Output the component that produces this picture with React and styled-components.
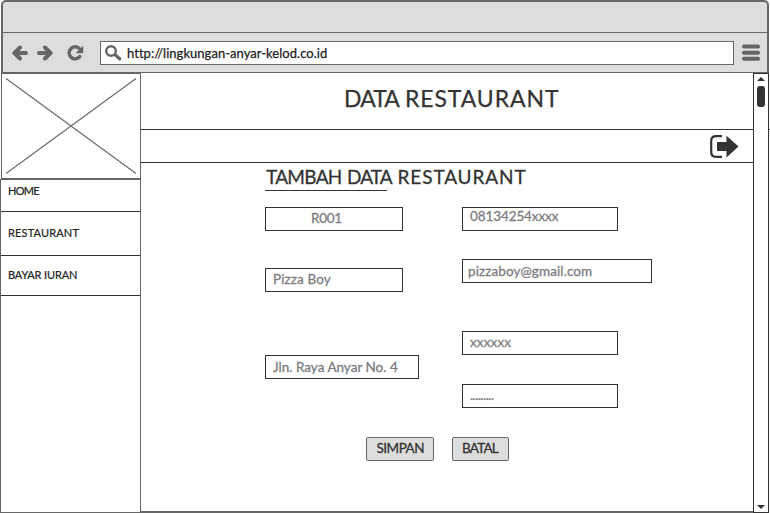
import React from "react";
import styled, { createGlobalStyle } from "styled-components";

const GRAY = "#666666";
const INK = "#333333";
const PANEL = "#dddddd";

const GlobalStyle = createGlobalStyle`
  * { box-sizing: border-box; }
  body { margin: 0; background: #fff; overflow: hidden; }
`;

const Page = styled.div`
  width: 770px;
  height: 513px;
  display: flex;
  flex-direction: column;
  background: #fff;
  color: ${INK};
  font-family: Lato, "Open Sans", sans-serif;
  font-weight: 400;
`;

const Chrome = styled.header`
  margin: 0 1px 0 1px;
  height: 73px;
  flex: none;
  border: 2px solid ${GRAY};
  border-bottom-width: 1px;
  border-radius: 5px 5px 0 0;
  background: ${PANEL};
`;

const TitleBar = styled.div`
  height: 31px;
  border-bottom: 1px solid ${GRAY};
`;

const Toolbar = styled.div`
  height: 39px;
  display: flex;
  align-items: center;
  padding: 0 7px 0 9px;
  svg { display: block; flex: none; }
`;

const NavIcons = styled.div`
  display: flex;
  width: 88px;
`;

const AddressBar = styled.div`
  display: flex;
  width: 634px;
  height: 24px;
  padding-left: 4px;
  margin-right: 8px;
  align-items: center;
  border: 1px solid ${GRAY};
  background: #fff;
`;

const Url = styled.span`
  margin-left: 5px;
  font-size: 13px;
  line-height: 16px;
  letter-spacing: 0.03px;
  white-space: nowrap;
  color: #222;
  -webkit-text-stroke: 0.25px #222;
`;

const Body = styled.div`
  flex: 1;
  display: flex;
  min-height: 0;
`;

const Sidebar = styled.aside`
  width: 141px;
  display: flex;
  flex-direction: column;
`;

const Picture = styled.div`
  height: 106px;
  margin-left: 1px;
  border: 1px solid ${GRAY};
  svg { display: block; }
`;

const Menu = styled.nav`
  flex: 1;
  border: 1px solid ${GRAY};
`;

const MenuItem = styled.div`
  height: ${(p) => p.$h}px;
  padding: ${(p) => p.$top}px 0 0 7px;
  border-bottom: 1px solid ${INK};
  font-size: 11px;
  line-height: 14px;
  letter-spacing: ${(p) => p.$ls}px;
  color: #222;
  -webkit-text-stroke: 0.2px #222;
`;

const Main = styled.main`
  width: 612px;
  display: flex;
  flex-direction: column;
  border-bottom: 2px solid ${GRAY};
`;

const PageTitle = styled.h1`
  margin: 0;
  height: 57px;
  display: flex;
  padding: 10px 0 0 203px;
  border-bottom: 1px solid ${INK};
  font-size: 23px;
  line-height: 30px;
  font-weight: 400;
  white-space: pre;
  -webkit-text-stroke: 0.25px ${INK};
`;

const Word = styled.span`
  flex: none;
  width: ${(p) => p.$w}px;
  letter-spacing: ${(p) => p.$ls}px;
`;

const ActionBar = styled.div`
  height: 33px;
  display: flex;
  justify-content: flex-end;
  padding: 5px 14px 0 0;
  border-bottom: 1px solid ${INK};
`;

const Content = styled.section`
  padding-left: 124px;
`;

const Heading = styled.h2`
  margin: 0;
  height: 27px;
  display: flex;
  padding: 2px 0 0 1px;
  font-size: 19px;
  line-height: 23px;
  font-weight: 400;
  white-space: pre;
  -webkit-text-stroke: 0.3px ${INK};
`;

const Rule = styled.div`
  width: 122px;
  height: 1px;
  background: ${INK};
`;

const Form = styled.div`
  display: flex;
  height: 246px;
  padding-top: 16px;
`;

const Column = styled.div`
  width: ${(p) => p.$w}px;
  display: flex;
  flex-direction: column;
`;

const Field = styled.div`
  width: ${(p) => p.$w}px;
  height: 24px;
  flex: none;
  margin-bottom: ${(p) => p.$gap || 0}px;
  padding: ${(p) => p.$top}px 0 0 ${(p) => p.$left}px;
  border: 1px solid ${INK};
  font-size: 13.5px;
  line-height: 16px;
  letter-spacing: ${(p) => p.$ls}px;
  white-space: nowrap;
  color: #7c7c80;
  -webkit-text-stroke: 0.3px #7c7c80;
`;

const Buttons = styled.div`
  display: flex;
  gap: 18px;
  padding-left: 101px;
`;

const Button = styled.button`
  width: ${(p) => p.$w}px;
  height: 24px;
  padding: 0 0 3px ${(p) => p.$left}px;
  border: 1px solid ${GRAY};
  border-radius: 2px;
  background: ${PANEL};
  color: ${INK};
  font: 400 13.5px/16px Lato, "Open Sans", sans-serif;
  letter-spacing: ${(p) => p.$ls}px;
  text-align: left;
  -webkit-text-stroke: 0.3px ${INK};
`;

const Scrollbar = styled.div`
  width: 16px;
  display: flex;
  flex-direction: column;
  align-items: center;
  padding: 3px 0;
  border: 1px solid ${INK};
  svg { display: block; }
`;

const Thumb = styled.div`
  width: 8px;
  height: 21px;
  margin-top: 5px;
  margin-bottom: auto;
  border-radius: 3px;
  background: ${INK};
`;

const Tick = styled.div`
  width: 1px;
  height: 1px;
  margin-top: 56px;
  background: ${INK};
`;

const Spacer = styled.span`
  width: ${(p) => p.$w}px;
`;

const BackArrow = () => (
  <svg width="16" height="16" viewBox="0 0 16 16" fill="none" stroke={GRAY} strokeWidth="4" strokeLinecap="round" strokeLinejoin="round">
    <path d="M8 2.5 2.4 8 8 13.5M3 8H14" />
  </svg>
);

const ForwardArrow = () => (
  <svg width="16" height="16" viewBox="0 0 16 16" fill="none" stroke={GRAY} strokeWidth="4" strokeLinecap="round" strokeLinejoin="round">
    <path d="M8 2.5 13.6 8 8 13.5M13 8H2" />
  </svg>
);

const Reload = () => (
  <svg width="17" height="16" viewBox="0 0 17 16">
    <path d="M12.4 3.6A6 6 0 1 0 12.8 11.6" fill="none" stroke={GRAY} strokeWidth="3.4" strokeLinecap="round" />
    <path d="M16.2 0.8V8.2H8.6Z" fill={GRAY} />
  </svg>
);

const Search = () => (
  <svg width="17" height="16" viewBox="0 0 17 16" fill="none" stroke={GRAY}>
    <circle cx="6" cy="6" r="4.8" strokeWidth="2.4" />
    <path d="M10.2 9.8 14.6 13.8" strokeWidth="3.2" strokeLinecap="round" />
  </svg>
);

const Hamburger = () => (
  <svg width="18" height="17" viewBox="0 0 18 17" fill={GRAY}>
    <rect y="0.6" width="18" height="4" rx="1.8" />
    <rect y="6.7" width="18" height="4" rx="1.8" />
    <rect y="12.8" width="18" height="4" rx="1.8" />
  </svg>
);

const Logout = () => (
  <svg width="29" height="23" viewBox="0 0 29 23">
    <path d="M12 1.2H6Q1.2 1.2 1.2 6V17Q1.2 21.8 6 21.8H12" fill="none" stroke={INK} strokeWidth="2.2" />
    <path d="M7.7 7H16.5V0.7L28.5 11.5 16.5 22.5V16H7.7Q7 16 7 15.2V7.8Q7 7 7.7 7Z" fill={INK} />
  </svg>
);

export default function App() {
  return (
    <Page>
      <GlobalStyle />
      <Chrome>
        <TitleBar />
        <Toolbar>
          <NavIcons>
            <BackArrow />
            <Spacer $w={9} />
            <ForwardArrow />
            <Spacer $w={14} />
            <Reload />
          </NavIcons>
          <AddressBar>
            <Search />
            <Url>http://lingkungan-anyar-kelod.co.id</Url>
          </AddressBar>
          <Hamburger />
        </Toolbar>
      </Chrome>
      <Body>
        <Sidebar>
          <Picture>
            <svg width="138" height="104" viewBox="0 0 138 104" stroke={GRAY} strokeWidth="1.1">
              <path d="M4 4.5 134 99.5M134 4.5 4 99.5" />
            </svg>
          </Picture>
          <Menu>
            <MenuItem $h={32} $top={4} $ls={-0.7}>HOME</MenuItem>
            <MenuItem $h={44} $top={14} $ls={0.15}>RESTAURANT</MenuItem>
            <MenuItem $h={40} $top={12} $ls={-0.15}>BAYAR IURAN</MenuItem>
          </Menu>
        </Sidebar>
        <Main>
          <PageTitle>
            <Word $w={61} $ls={-0.9}>DATA </Word>
            <Word $ls={0.9}>RESTAURANT</Word>
          </PageTitle>
          <ActionBar>
            <Logout />
          </ActionBar>
          <Content>
            <Heading>
              <Word $w={81} $ls={-0.7}>TAMBAH </Word>
              <Word $w={50.5} $ls={-0.9}>DATA </Word>
              <Word $ls={0.9}>RESTAURANT</Word>
            </Heading>
            <Rule />
            <Form>
              <Column $w={197}>
                <Field $w={138} $top={2} $left={45} $gap={37} $ls={-0.3}>R001</Field>
                <Field $w={138} $top={2} $left={7} $gap={63} $ls={0.12}>Pizza Boy</Field>
                <Field $w={154} $top={3} $left={7} $ls={0}>Jln. Raya Anyar No. 4</Field>
              </Column>
              <Column $w={190}>
                <Field $w={156} $top={0} $left={7} $gap={28} $ls={-0.1}>08134254xxxx</Field>
                <Field $w={190} $top={3} $left={5} $gap={48} $ls={0.1}>pizzaboy@gmail.com</Field>
                <Field $w={156} $top={2} $left={7} $gap={29} $ls={0.15}>xxxxxx</Field>
                <Field $w={156} $top={2} $left={7} $ls={-0.6}>.........</Field>
              </Column>
            </Form>
            <Buttons>
              <Button $w={68} $left={9.5} $ls={-0.5}>SIMPAN</Button>
              <Button $w={57} $left={9} $ls={-0.8}>BATAL</Button>
            </Buttons>
          </Content>
        </Main>
        <Scrollbar>
          <svg width="8" height="4" viewBox="0 0 8 4" fill={INK}><path d="M0 4 4 0 8 4Z" /></svg>
          <Thumb />
          <svg width="8" height="4" viewBox="0 0 8 4" fill={INK}><path d="M0 0 4 4 8 0Z" /></svg>
        </Scrollbar>
        <Tick />
      </Body>
    </Page>
  );
}
